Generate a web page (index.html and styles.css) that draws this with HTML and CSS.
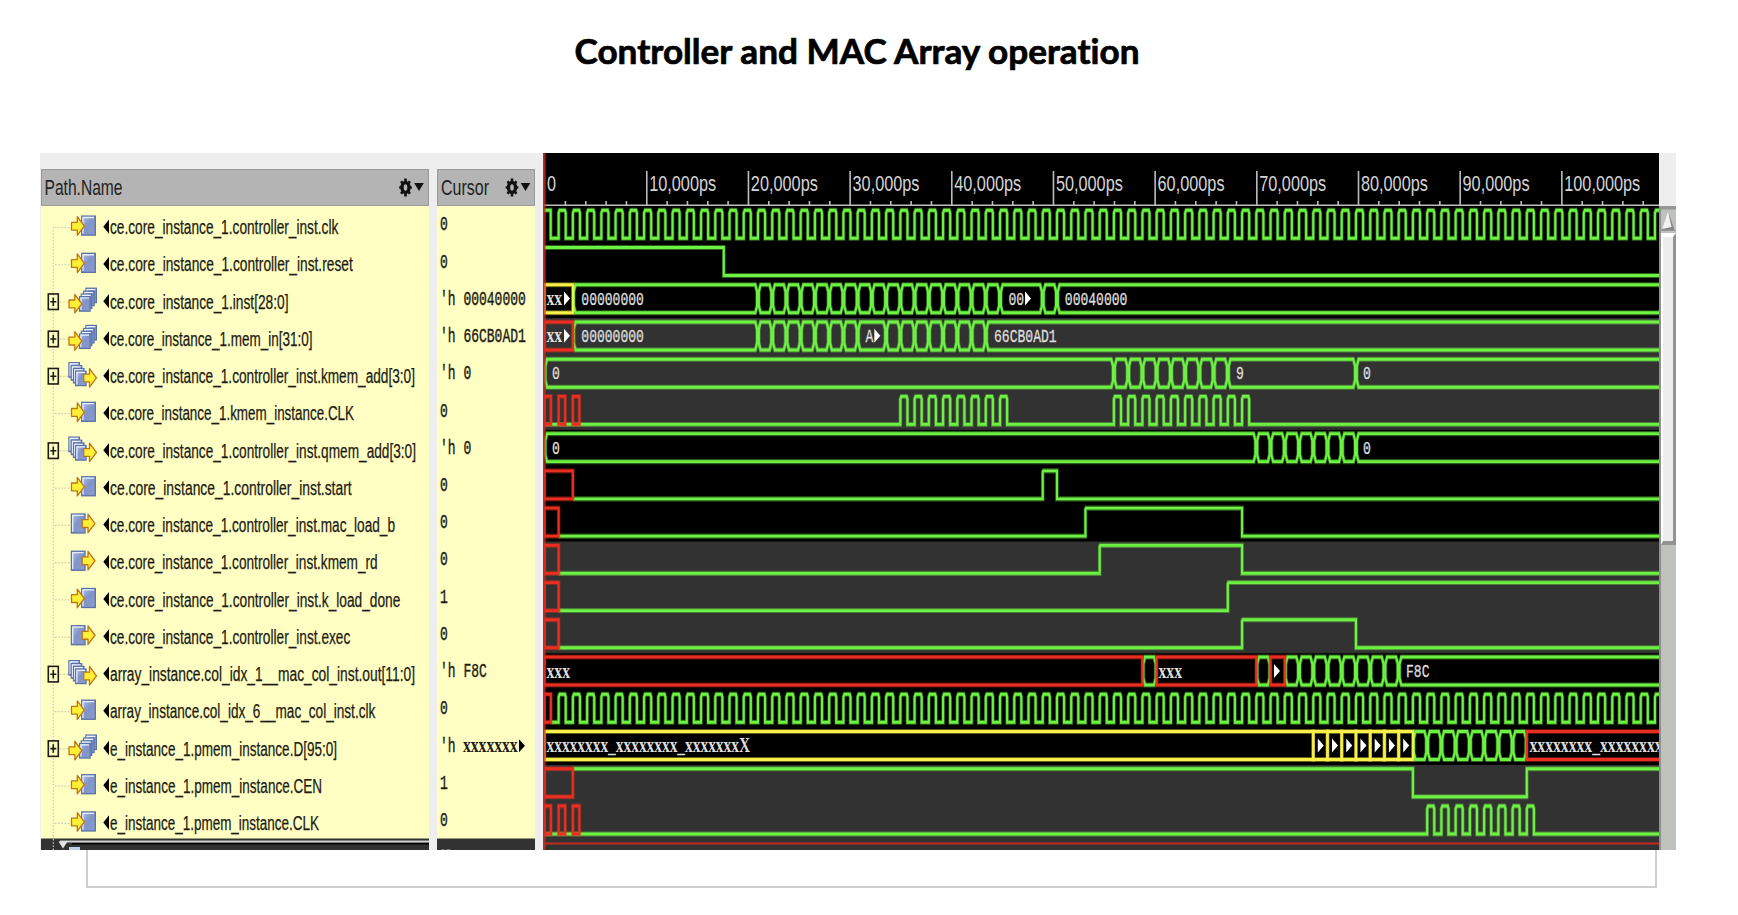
FILE: index.html
```html
<!DOCTYPE html>
<html lang="en">
<head>
<meta charset="utf-8">
<title>Controller and MAC Array operation</title>
<link rel="stylesheet" href="styles.css">
</head>
<body>
<main class="slide">
  <h1 class="title"><svg class="title-svg" width="600" height="60" viewBox="560 20 600 60"><text class="title-text" x="574.5" y="63.6" textLength="565" lengthAdjust="spacingAndGlyphs">Controller and MAC Array operation</text></svg></h1>
  <section class="viewer">
    <div class="column names">
      <header class="head">
        <svg class="head-svg" width="388" height="37" viewBox="41 169 388 37"><text class="head-text" x="44.500" y="195" textLength="78" lengthAdjust="spacingAndGlyphs">Path.Name</text><use href="#gear" x="405.500" y="187.500"/></svg>
      </header>
      <div class="rows" id="names"></div>
    </div>
    <div class="column cursor">
      <header class="head">
        <svg class="head-svg" width="98" height="37" viewBox="436.5 169 98 37"><text class="head-text" x="440.500" y="195" textLength="48" lengthAdjust="spacingAndGlyphs">Cursor</text><use href="#gear" x="511.500" y="187.500"/></svg>
      </header>
      <div class="rows" id="values"></div>
    </div>
    <svg class="waves" id="waves" width="1116.5" height="697" viewBox="542.5 153 1116.5 697"></svg>
    <div class="scroll">
      <div class="scroll-corner"></div>
      <svg class="scroll-up" width="17" height="27" viewBox="0 0 17 27"><rect class="scroll-line" width="17" height="3.5"/><path class="tri-shade" d="M9 5 15.5 24H2.5z"/><path class="tri" d="M9 5 12.5 21 3 23z"/><rect class="scroll-line" y="24" width="17" height="1"/></svg>
      <div class="thumb"></div>
    </div>
  </section>
  <div class="frame"></div>
</main>
<svg class="defs" width="0" height="0">
  <defs>
    <linearGradient id="blue" x1="0" y1="0" x2="1" y2="1"><stop offset="0" stop-color="#b4c4ea"/><stop offset=".45" stop-color="#8294c8"/><stop offset="1" stop-color="#8a9ccd"/></linearGradient>
    <g id="gear"><ellipse rx="3.500" ry="4.900" fill="none" stroke="#111" stroke-width="3.400"/><path d="M0-9V-5M0 5V9M-6.3 0H-4M4 0H6.3M-4.4-6.2-2.8-4M4.4-6.2 2.8-4M-4.4 6.2-2.8 4M4.4 6.2 2.8 4" stroke="#111" stroke-width="2.600"/><path d="M8.700-4.500H18.300L13.500 3.500z" fill="#111"/></g>
    <g id="box"><rect x=".7" y=".8" width="13.600" height="19" fill="url(#blue)" stroke="#5872a8" stroke-width="1.3"/><path d="M2 18.500V2.200H13" fill="none" stroke="#e6edfb" stroke-width="1.300"/></g>
    <g id="sheet"><rect x=".6" y=".7" width="10.500" height="14.500" fill="url(#blue)" stroke="#5872a8" stroke-width="1.200"/><path d="M1.900 14V2H10" fill="none" stroke="#edf2ff" stroke-width="1.200"/></g>
    <path id="arrow" d="M.7 6.500H6.500V.9L13.500 10.300 6.500 19.500V14.300H.7z" fill="#fff036" stroke="#bd741c" stroke-width="1.300" stroke-linejoin="round"/>
    <g id="in"><use href="#box" x="81" y="215.300"/><use href="#arrow" x="70.800" y="215.800"/></g>
    <g id="out"><use href="#box" x="70.700" y="215.300"/><use href="#arrow" x="81.500" y="215.300"/></g>
    <g id="min"><use href="#sheet" x="85.300" y="213"/><use href="#sheet" x="83" y="216"/><use href="#sheet" x="80.700" y="218.800"/><use href="#sheet" x="79" y="221.500"/><use href="#arrow" x="68.300" y="219"/></g>
    <g id="mout"><use href="#sheet" x="68.300" y="213"/><use href="#sheet" x="70.600" y="216"/><use href="#sheet" x="72.900" y="218.800"/><use href="#sheet" x="75" y="221.500"/><use href="#arrow" x="83" y="218.700"/></g>
  </defs>
</svg>
<script src="script.js"></script>
</body>
</html>
```
FILE: styles.css
```css
body { margin: 0; background: #fff; }
.slide { width: 1738px; height: 915px; overflow: hidden; }
.title { margin: 0; height: 133px; padding: 20px 0 0 560px; box-sizing: content-box; }
.title-svg, .head-svg, .row-svg, .waves, .scroll-up { display: block; }
.title-text { font: bold 34px Lato, "Open Sans", sans-serif; font-variant-ligatures: none; fill: #000; stroke: #000; stroke-width: .7px; }
.viewer { display: flex; margin-left: 40px; width: 1636px; height: 697px; overflow: hidden; background: #eee; }
.column { flex: none; padding-top: 16px; }
.names { width: 387.500px; margin: 0 8px 0 1px; }
.cursor { width: 98px; margin-right: 8px; }
.head { height: 37px; overflow: hidden; background: #b4b4b4; box-shadow: inset 0 0 0 1px #999b99; }
.head-text { font: 22px "Liberation Sans", sans-serif; fill: #222; }
.rows { height: 644px; overflow: hidden; background: #fffec3; }
.row-svg { overflow: visible; }
.name-text { font: 19.500px "Liberation Sans", sans-serif; fill: #1c1c14; stroke: #1c1c14; stroke-width: .25px; }
.value-text { font: 19.500px "Liberation Mono", monospace; fill: #1c1c14; stroke: #1c1c14; stroke-width: .4px; }
.tree { fill: none; stroke: #c9c9ae; stroke-width: 1.200px; stroke-dasharray: 1.500px 1.700px; }
.plus { fill: none; stroke: #1c1c14; stroke-width: 1.600px; }
.waves { flex: none; background: #000; }
.time { font: 22.500px "Liberation Sans", sans-serif; fill: #d4d4d4; }
.label { font: 18.500px "Liberation Mono", monospace; fill: #dedede; stroke: #dedede; stroke-width: .3px; }
.serif { font: bold 20px "Liberation Serif", serif; stroke-width: 0; }
.axis { stroke: #bdbdbd; fill: none; stroke-width: 1.600px; }
.halo { opacity: .4; stroke-width: 3.600px; fill: none; }
.core { stroke-width: 2.100px; fill: none; }
.g { stroke: #6df243; }
.r { stroke: #ea2e20; }
.y { stroke: #f8f048; }
.scroll { flex: none; width: 17px; display: flex; flex-direction: column; background: #bfc1bd; box-shadow: inset 2px 0 0 #8f8f91; }
.scroll-corner { height: 53px; background: #eee; }
.scroll-line { fill: #969696; }
.tri-shade { fill: #868686; }
.tri { fill: #f2f2f2; }
.thumb { height: 312px; margin-left: 2px; background: #ededed; border: solid; border-width: 4px 3px 4px 2px; border-color: #fff #929292 #929292 #fff; box-sizing: border-box; }
.frame { width: 1567px; height: 36px; margin-left: 86px; border: 2px solid #cfcfcf; border-top: 0; }
.defs { position: absolute; }
```
FILE: script.js
```js
const PITCH = 37.24;
// [name, right edge of the name, icon, value]
const signals = [
  ['ce.core_instance_1.controller_inst.clk', 338.3, 'in', '0'],
  ['ce.core_instance_1.controller_inst.reset', 352.7, 'in', '0'],
  ['ce.core_instance_1.inst[28:0]', 288.5, 'min', "'h 00040000"],
  ['ce.core_instance_1.mem_in[31:0]', 312.5, 'min', "'h 66CB0AD1"],
  ['ce.core_instance_1.controller_inst.kmem_add[3:0]', 415, 'mout', "'h 0"],
  ['ce.core_instance_1.kmem_instance.CLK', 354, 'in', '0'],
  ['ce.core_instance_1.controller_inst.qmem_add[3:0]', 416, 'mout', "'h 0"],
  ['ce.core_instance_1.controller_inst.start', 351.7, 'in', '0'],
  ['ce.core_instance_1.controller_inst.mac_load_b', 395, 'out', '0'],
  ['ce.core_instance_1.controller_inst.kmem_rd', 377.7, 'out', '0'],
  ['ce.core_instance_1.controller_inst.k_load_done', 400.3, 'in', '1'],
  ['ce.core_instance_1.controller_inst.exec', 350.3, 'out', '0'],
  ['array_instance.col_idx_1__mac_col_inst.out[11:0]', 415, 'mout', "'h F8C"],
  ['array_instance.col_idx_6__mac_col_inst.clk', 375.3, 'in', '0'],
  ['e_instance_1.pmem_instance.D[95:0]', 337, 'min', "'h xxxxxxx"],
  ['e_instance_1.pmem_instance.CEN', 322, 'in', '1'],
  ['e_instance_1.pmem_instance.CLK', 319, 'in', '0']
];

let names = '<svg class="row-svg" width="387.5" height="644" viewBox="41 206 387.5 644">' +
  '<path class="tree" d="M53.3 227V838"/>';
let values = '<svg class="row-svg" width="98" height="644" viewBox="436.5 206 98 644">';
const valueText = (x, y, text, extra) =>
  `<text class="value-text ${extra}" x="${x}" y="${y}" textLength="${text.length * 7.8}" lengthAdjust="spacingAndGlyphs">${text}</text>`;
signals.forEach(([name, right, icon, value], i) => {
  const y = i * PITCH;
  const bus = icon[0] === 'm';
  names += `<g transform="translate(0 ${y})"><path class="tree" d="M${bus ? 60 : 55} 227.500H70"/>` +
    (bus ? '<rect x="48.300" y="219.500" width="10" height="15.500" fill="#fffec3" class="plus"/><path class="plus" d="M50.300 227.300H56.300M53.300 223V231.500"/>' : '') +
    `<use href="#${icon}"/><path d="M109 219.500V233.800L103.300 226.700z"/>` +
    `<text class="name-text" x="110" y="234.200" textLength="${right - 110}" lengthAdjust="spacingAndGlyphs">${name}</text></g>`;
  if (value.includes('x')) {
    values += valueText(439.5, 230.3 + y, "'h", '') + valueText(462.5, 230.3 + y, value.slice(3), 'serif');
    values += `<path d="M518.500 ${218 + y}V${231 + y}L524.500 ${224.500 + y}z"/>`;
  } else {
    values += valueText(439.5, 230.3 + y, value, '');
  }
});
names += '<rect x="41" y="838.500" width="388" height="12" fill="#323232"/><rect x="60" y="840.500" width="369" height="2" fill="#d0d0d0"/><rect x="72" y="843" width="357" height="1.500" fill="#000"/><path d="M58.500 841.500H67.500L63 848.500z" fill="#e4e4e4"/><path d="M69 850V847H80V850z" fill="#c3cfea"/><path class="tree" d="M53.300 839V850"/></svg>';
values += '<rect x="436" y="838.500" width="99" height="12" fill="#323232"/><path d="M441 849.500H444M446 849.500H450" stroke="#777"/></svg>';
document.getElementById('names').innerHTML = names;
document.getElementById('values').innerHTML = values;

// Traces: X(k) is the position of clock edge k; rows are 20 units tall, stretched by 1.4.
const X = k => 543.9 + 14.238 * k;
const END = 1662, K = (END - 543.9) / 14.238, HALF = 7.1;
let svg = '';
for (const [a, b] of [[3, 6], [9, 12], [15, 18]]) {
  svg += `<rect x="542" y="${206.400 + a * PITCH}" width="1120" height="${(b - a) * PITCH}" fill="#323232"/>`;
}
const draw = (row, color, d) => {
  svg += `<g transform="translate(0 ${210.2 + row * PITCH}) scale(1 1.4)"><path class="halo ${color}" d="${d}"/><path class="core ${color}" d="${d}"/></g>`;
};
const label = (row, x, text) => {
  const serif = /^x/.test(text);
  svg += `<text class="label ${serif ? 'serif' : ''}" x="${x}" y="${(serif ? 305.2 : 304.7) + (row - 2) * PITCH}" textLength="${text.length * 7.83}" lengthAdjust="spacingAndGlyphs">${text}</text>`;
};
const mark = (row, x) => {
  const y = 291.500 + (row - 2) * PITCH;
  svg += `<path d="M${x} ${y}V${y + 14}L${x + 6} ${y + 7}z" fill="#fff"/>`;
};
const hexes = (row, edges) => {
  for (let i = 0; i + 1 < edges.length; i++) {
    const a = X(edges[i]), b = X(edges[i + 1]);
    draw(row, 'g', `M${a + 2.6} 0H${b - 2.600}L${b - .9} 5V15L${b - 2.600} 20H${a + 2.600}L${a + .9} 15V5Z`);
  }
};
const rect = (row, color, a, b) => draw(row, color, `M${X(a)} 0H${X(b)}V20H${X(a)}Z`);
const range = (a, b) => Array.from({ length: b - a + 1 }, (_, i) => a + i);
const pulse = k => `L${X(k)} 20V2L${X(k) + 1} 0H${X(k) + HALF - .8}L${X(k) + HALF} 2V20`;
const pulses = (from, to) => range(from, to).map(pulse).join('');
const redClocks = row => [0, 1, 2].forEach(k => draw(row, 'r', `M${X(k)} 0H${X(k) + HALF - .6}V20H${X(k)}Z`));

draw(0, 'g', `M${X(0)} 0H${X(0) + HALF - .8}V20` + pulses(1, 78));
draw(1, 'g', `M${X(0)} 0H723.300V20H${END}`);
hexes(2, [2, ...range(15, 32), 35, 36, K]);
rect(2, 'y', 0, 2);
label(2, 546, 'xx'); mark(2, 563.500); label(2, 580.800, '00000000'); label(2, 1008, '00'); mark(2, 1024.500); label(2, 1064.300, '00040000');
hexes(3, [2, ...range(15, 22), ...range(24, 31), K]);
rect(3, 'r', 0, 2);
label(3, 546, 'xx'); mark(3, 563.500); label(3, 580.800, '00000000'); label(3, 865, 'A'); mark(3, 873.800); label(3, 993.500, '66CB0AD1');
hexes(4, [0, ...range(40, 48), 57, K]);
label(4, 551.500, '0'); label(4, 1235.500, '9'); label(4, 1362.500, '0');
draw(5, 'g', `M${X(0)} 20` + pulses(25, 32) + pulses(40, 49) + `H${END}`);
redClocks(5);
hexes(6, [0, ...range(50, 57), K]);
label(6, 551.500, '0'); label(6, 1362.500, '0');
const high = (row, a, b, red) => {
  draw(row, 'g', `M${X(red)} 20H${X(a)}V1L${X(a) + .6} 0H${X(b)}` + (b === K ? '' : `V20H${END}`));
  rect(row, 'r', 0, red);
};
high(7, 35, 36, 2);
high(8, 38, 49, 1);
high(9, 39, 49, 1);
high(10, 48, K, 1);
high(11, 49, 57, 1);
hexes(12, [42, 43]); hexes(12, [50, 51]); hexes(12, [...range(52, 60), K]);
rect(12, 'r', 0, 42); rect(12, 'r', 43, 50); rect(12, 'r', 51, 52);
label(12, 546, 'xxx'); label(12, 1158, 'xxx'); mark(12, 1273.500); label(12, 1405.500, 'F8C');
draw(13, 'g', `M${X(0) + HALF} 20` + pulses(1, 78));
draw(13, 'r', `M${X(0)} 0H${X(0) + HALF - .6}V20H${X(0)}Z`);
hexes(14, range(61, 69));
rect(14, 'y', 0, 54);
range(54, 60).forEach(k => { rect(14, 'y', k, k + 1); mark(14, X(k) + 4.500); });
draw(14, 'r', `M${END} 0H${X(69)}V20H${END}`);
label(14, 546, 'xxxxxxxx_xxxxxxxx_xxxxxxxX'); label(14, 1529, 'xxxxxxxx_xxxxxxxxx');
draw(15, 'g', `M${X(2)} 0H${X(61)}V20H${X(69)}V0H${END}`);
rect(15, 'r', 0, 2);
draw(16, 'g', `M${X(0)} 20` + pulses(62, 69) + `H${END}`);
redClocks(16);
svg += '<path d="M544 843.500H1662" stroke="#c4291e" stroke-width="2.200"/>';

// Time ruler
svg += '<path class="axis" d="M542 205.300H1662"/>';
for (let i = 1; i <= 54; i++) {
  const x = 544.6 + i * 20.335;
  svg += `<path class="axis" d="M${x} ${i % 5 ? 201 : 171}V205"/>`;
}
svg += '<text class="time" x="546.500" y="190.800" textLength="9" lengthAdjust="spacingAndGlyphs">0</text>';
for (let i = 1; i <= 10; i++) {
  svg += `<text class="time" x="${544.6 + i * 101.675 + 2.4}" y="190.800" textLength="${i === 10 ? 76 : 67}" lengthAdjust="spacingAndGlyphs">${i}0,000ps</text>`;
}
// Cursor line
svg += '<path d="M544.400 153V850" stroke="#d92a1c" stroke-width="1.300"/><path d="M543 153V850" stroke="#555" stroke-width="1"/>';
document.getElementById('waves').innerHTML = svg;
```
